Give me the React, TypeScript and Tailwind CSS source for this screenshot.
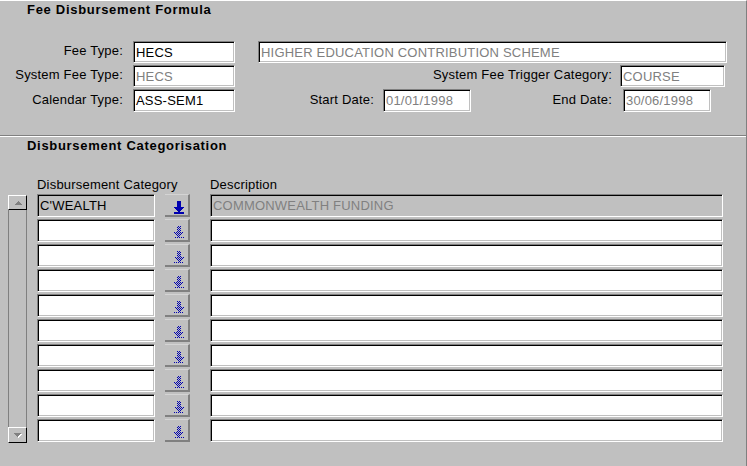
const sunken =
  "border border-t-[#808080] border-l-[#808080] border-b-white border-r-white shadow-[inset_1px_1px_0_#000,inset_-1px_-1px_0_#c0c0c0] flex items-center pl-[2px] whitespace-nowrap overflow-hidden";

function Field({
  value = "",
  width,
  muted = false,
  grey = false,
  height = "h-[22px]",
}: {
  value?: string;
  width: string;
  muted?: boolean;
  grey?: boolean;
  height?: string;
}) {
  return (
    <div
      className={`${sunken} ${width} ${height} ${grey ? "bg-[#c0c0c0]" : "bg-white"} ${
        muted ? "text-[#808080]" : "text-black"
      }`}
    >
      {value}
    </div>
  );
}

// arrow-with-bar glyph, row by row: [from, to] columns
const glyph: [number, number][] = [
  [3, 6], [3, 6], [3, 6], [3, 6], [3, 6], [3, 6],
  [0, 9], [1, 8], [2, 7], [3, 6], [4, 5],
  [0, 9], [0, 9],
];

// rows sit 25px apart, so the checker phase is shifted per row to keep it on the same screen grid
function LovIcon({ row }: { row: number }) {
  const enabled = row === 0;
  const px: { x: number; y: number }[] = [];
  glyph.forEach(([a, b], y) => {
    for (let x = a; x <= b; x++) {
      if (enabled) px.push({ x, y });
      else if (y !== 12 && (x + y + row + 1) % 2 === 0) px.push({ x, y });
    }
  });
  return (
    <svg width="10" height="13" viewBox="0 0 10 13" shapeRendering="crispEdges" className="block">
      {px.map((p) => (
        <rect key={`${p.x}-${p.y}`} x={p.x} y={p.y} width="1" height="1" fill="#0000b0" />
      ))}
    </svg>
  );
}

function ScrollBar() {
  return (
    <div className="w-[19px] h-[248px] mt-px flex flex-col">
      <div className="h-[15px] border-t border-l border-t-white border-l-white border-b border-r border-b-black border-r-black flex items-center justify-center">
        <svg width="8" height="4" viewBox="0 0 8 4" shapeRendering="crispEdges">
          <polygon points="0,4 8,4 4,0" fill="#808080" />
        </svg>
      </div>
      <div className="flex-1 border-x border-x-[#808080]" />
      <div className="h-[16px] border-t border-l border-t-white border-l-white border-b border-r border-b-black border-r-black flex items-center justify-center">
        <svg width="9" height="5" viewBox="0 0 9 5" shapeRendering="crispEdges">
          <polygon points="1,1 9,1 5,5" fill="#ffffff" />
          <polygon points="0,0 8,0 4,4" fill="#808080" />
        </svg>
      </div>
    </div>
  );
}

const rows = Array.from({ length: 10 }, (_, i) => i);

export default function App() {
  return (
    <div className="w-[747px] h-[466px] bg-[#c0c0c0] border-t border-t-white border-r border-r-[#808080] font-['Liberation_Sans',Arial,sans-serif] text-[13px] leading-[15px] tracking-[0.2px] text-black overflow-hidden">
      <section className="h-[135px] border-b border-b-[#808080] pt-[1px]">
        <h2 className="pl-[27px] font-bold tracking-[0.7px]">Fee Disbursement Formula</h2>

        <div className="mt-[24px] flex flex-col gap-[2px]">
          <div className="flex h-[22px]">
            <div className="w-[123px] text-right pt-[2px]">Fee Type:</div>
            <div className="ml-[10px]">
              <Field value="HECS" width="w-[102px]" />
            </div>
            <div className="ml-[23px]">
              <Field value="HIGHER EDUCATION CONTRIBUTION SCHEME" width="w-[469px]" muted />
            </div>
          </div>

          <div className="flex h-[22px]">
            <div className="w-[123px] text-right pt-[2px]">System Fee Type:</div>
            <div className="ml-[10px]">
              <Field value="HECS" width="w-[102px]" muted />
            </div>
            <div className="w-[377px] text-right pt-[2px]">System Fee Trigger Category:</div>
            <div className="ml-[8px]">
              <Field value="COURSE" width="w-[105px]" muted />
            </div>
          </div>

          <div className="flex h-[23px]">
            <div className="w-[123px] text-right pt-[3px]">Calendar Type:</div>
            <div className="ml-[10px]">
              <Field value="ASS-SEM1" width="w-[102px]" height="h-[23px]" />
            </div>
            <div className="w-[139px] text-right pt-[3px]">Start Date:</div>
            <div className="ml-[9px]">
              <Field value="01/01/1998" width="w-[88px]" height="h-[23px]" muted />
            </div>
            <div className="w-[141px] text-right pt-[3px]">End Date:</div>
            <div className="ml-[11px]">
              <Field value="30/06/1998" width="w-[88px]" height="h-[23px]" muted />
            </div>
          </div>
        </div>
      </section>

      <section className="border-t border-t-white pt-[1px]">
        <h2 className="pl-[27px] font-bold tracking-[0.7px]">Disbursement Categorisation</h2>

        <div className="mt-[24px] flex">
          <div className="ml-[37px] w-[173px]">Disbursement Category</div>
          <div>Description</div>
        </div>

        <div className="mt-[2px] flex pl-[8px]">
          <ScrollBar />

          <div className="ml-[10px] flex flex-col gap-[2px]">
            {rows.map((i) => (
              <Field
                key={i}
                value={i === 0 ? "C'WEALTH" : ""}
                width="w-[118px]"
                height="h-[23px]"
                grey={i === 0}
              />
            ))}
          </div>

          <div className="ml-[10px] flex flex-col gap-[2px]">
            {rows.map((i) => (
              <div
                key={i}
                className="w-[25px] h-[23px] border-t border-t-[#d4d4d4] border-b-2 border-r-2 border-b-[#808080] border-r-[#808080] pt-[6px] pl-[9px]"
              >
                <LovIcon row={i} />
              </div>
            ))}
          </div>

          <div className="ml-[20px] flex flex-col gap-[2px]">
            {rows.map((i) => (
              <Field
                key={i}
                value={i === 0 ? "COMMONWEALTH FUNDING" : ""}
                width="w-[513px]"
                height="h-[23px]"
                grey={i === 0}
                muted={i === 0}
              />
            ))}
          </div>
        </div>
      </section>
    </div>
  );
}
